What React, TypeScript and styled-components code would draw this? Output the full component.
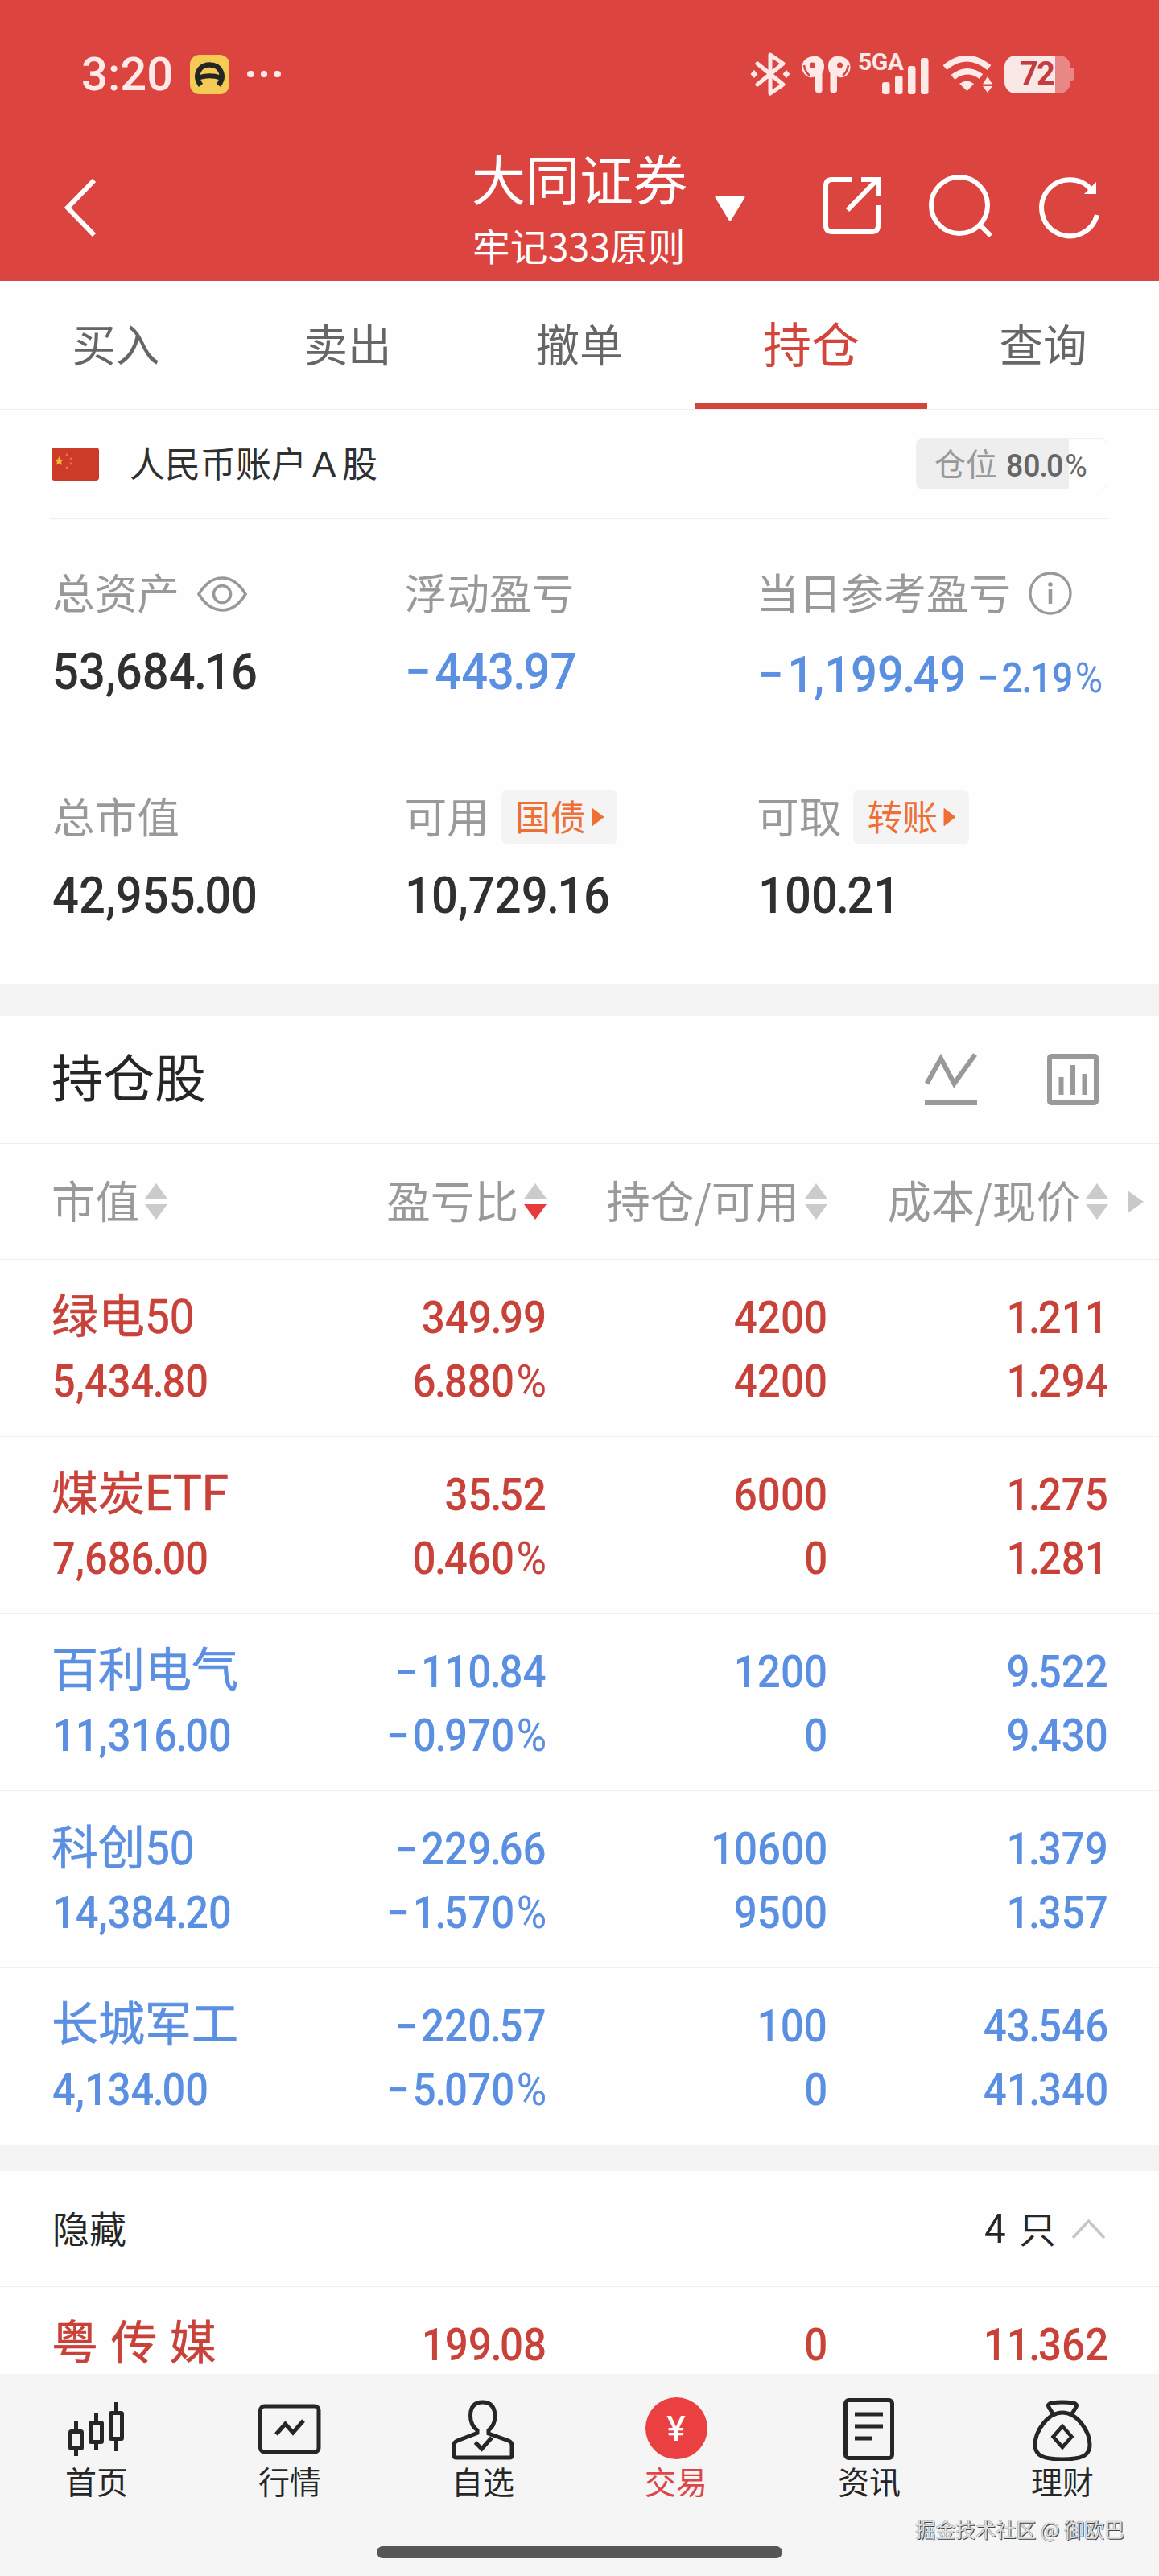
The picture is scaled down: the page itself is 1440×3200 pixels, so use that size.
import React from "react";
import styled, { createGlobalStyle, css } from "styled-components";

const CJK = `"Noto Sans CJK SC", sans-serif`;
const NUM = `Roboto, "Noto Sans CJK SC", sans-serif`;

const color = {
  brand: "#dc4440",
  active: "#d3453a",
  up: "#c8423a",
  down: "#5b8fe2",
  ink: "#262626",
  value: "#303030",
  label: "#999999",
  line: "#eeeeee",
  band: "#f4f4f4",
  orange: "#ee7034",
  status: "#fde9e8",
};

const GlobalStyle = createGlobalStyle`
  * { box-sizing: border-box; }
  body { margin: 0; background: #fefefe; }
`;

const Screen = styled.main`
  position: relative;
  display: flex;
  flex-direction: column;
  width: 1440px;
  height: 3200px;
  overflow: hidden;
  background: #fefefe;
  color: ${color.ink};
  font-family: ${CJK};
  white-space: nowrap;

  svg { display: block; flex: none; }
`;

/* Header */

const Header = styled.header`
  display: flex;
  flex-direction: column;
  flex: none;
  height: 349px;
  background: ${color.brand};
  color: #fff;
`;

const StatusBar = styled.div`
  display: flex;
  justify-content: space-between;
  align-items: center;
  height: 184px;
  padding: 0 105px 0 101px;
  color: ${color.status};
`;

const StatusGroup = styled.div`
  display: flex;
  align-items: center;
`;

const Clock = styled.span`
  width: 135px;
  font: 500 58px/60px ${NUM};
`;

const Dots = styled.div`
  display: flex;
  gap: 8px;
  margin-left: 22px;

  i { width: 8.5px; height: 8.5px; border-radius: 50%; background: ${color.status}; }
`;

const Battery = styled.div`
  display: flex;
  align-items: center;
  width: 87px;
  height: 47px;
  margin-left: 15px;
`;

const BatteryBody = styled.div`
  width: 82px;
  height: 47px;
  border-radius: 14px;
  padding-left: 19px;
  background: linear-gradient(90deg, #fae8e7 63px, #e98786 63px);
  color: #c23c40;
  font: 700 40px/46px ${NUM};
  letter-spacing: -2px;
`;

const BatteryNub = styled.div`
  width: 5px;
  height: 16px;
  border-radius: 0 4px 4px 0;
  background: #e98786;
`;

const NavBar = styled.div`
  display: grid;
  grid-template-columns: 508px 352px 1fr;
  height: 165px;
  padding-left: 80px;
`;

const BackButton = styled.div`
  padding-top: 38px;
`;

const TitleBlock = styled.div`
  display: flex;
  gap: 33px;
  margin-left: -2px;
`;

const Title = styled.div`
  font-size: 67px;
  line-height: 72px;
`;

const Subtitle = styled.div`
  margin-top: 22px;
  padding-left: 1px;
  font-size: 46.7px;
  line-height: 52px;
`;

const Caret = styled.div`
  padding-top: 59px;
`;

const Actions = styled.div`
  display: flex;
  gap: 58px;
  padding: 33px 0 0 82px;
`;

/* Tabs */

const Tabs = styled.nav`
  display: grid;
  grid-template-columns: repeat(5, 288px);
  flex: none;
  height: 160px;
  border-bottom: 1.5px solid ${color.line};
`;

const Tab = styled.div<{ $active?: boolean }>`
  height: 159px;
  text-align: center;
  color: #666;
  font-size: 54.5px;
  line-height: 153px;
  ${(p) =>
    p.$active &&
    css`
      color: ${color.active};
      font-size: 60px;
      line-height: 152px;
      border-bottom: 7px solid ${color.active};
    `}
`;

/* Account summary */

const Account = styled.section`
  display: flex;
  align-items: center;
  flex: none;
  height: 136px;
  margin: 0 62px;
  padding: 0 2px 1px 2px;
  border-bottom: 1.5px solid ${color.line};
`;

const AccountName = styled.div`
  flex: 1;
  margin: -5px 0 0 38px;
  color: #303030;
  font-size: 44px;
  line-height: 60px;
`;

const Position = styled.div`
  display: flex;
  align-items: center;
  gap: 11px;
  width: 238px;
  height: 64px;
  padding-left: 22px;
  border: 1px solid #f1f1f1;
  border-radius: 8px;
  background: linear-gradient(90deg, #eeeeee 189px, #fefefe 189px);
  color: ${color.label};
  font-size: 39px;
  line-height: 56px;

  > span { margin-top: -4px; }
`;

const PositionValue = styled.div`
  margin-top: 2px;
  color: #666;
`;

const NumText = styled.span<{ $size: number; $squeeze?: number; $right?: boolean; $weight?: number }>`
  display: inline-block;
  font-family: ${NUM};
  font-size: ${(p) => p.$size}px;
  font-weight: ${(p) => p.$weight ?? 500};
  transform: scaleX(${(p) => p.$squeeze ?? 0.92});
  transform-origin: ${(p) => (p.$right ? "right" : "left")} center;
`;

const Glyph = styled.span<{ $before?: number; $after?: number; $light?: boolean }>`
  margin-left: ${(p) => p.$before ?? 0}em;
  margin-right: ${(p) => p.$after ?? 0}em;
  font-weight: ${(p) => (p.$light ? 400 : "inherit")};
`;

/* Tightens the decimal point and opens up the minus and percent signs. */
const Num = ({ children, ...rest }: { children: string } & React.ComponentProps<typeof NumText>) => (
  <NumText {...rest}>
    {children.split(/([−.%])/).map((part, i) => {
      if (part === ".") return <Glyph key={i} $before={-0.03} $after={-0.05}>.</Glyph>;
      if (part === "−") return <Glyph key={i} $after={0.08}>−</Glyph>;
      if (part === "%") return <Glyph key={i} $before={0.05} $light>%</Glyph>;
      return part;
    })}
  </NumText>
);

const Summary = styled.section`
  display: grid;
  grid-template-columns: 437.5px 437.5px 1fr;
  grid-template-rows: 278px 1fr;
  flex: none;
  height: 577px;
  padding: 52px 0 0 65px;
`;

const Label = styled.div`
  display: flex;
  align-items: center;
  height: 80px;
  color: ${color.label};
  font-size: 52.7px;
  line-height: 80px;

  > span { margin-top: -7px; }
`;

const LabelIcon = styled.div<{ $lift?: number }>`
  margin: ${(p) => p.$lift ?? 0}px 0 0 22px;
`;

const Amount = styled.div<{ $loss?: boolean; $drop?: number }>`
  display: flex;
  align-items: baseline;
  margin-top: ${(p) => 18 + (p.$drop ?? 0)}px;
  line-height: 80px;
  color: ${(p) => (p.$loss ? color.down : color.value)};
`;

const DayProfit = styled.div`
  margin: 0 -9px 0 1px;
`;

const Withdrawable = styled(Amount)`
  padding-left: 2px;
`;

const Chip = styled.div`
  display: flex;
  align-items: center;
  height: 68px;
  margin-left: 15px;
  padding: 0 16px 0 17px;
  border-radius: 8px;
  background: ${color.band};
  color: ${color.orange};
  font-size: 44px;
  line-height: 60px;

  > span { margin: -5px 7px 0 0; }
`;

const Band = styled.div<{ $height: number }>`
  flex: none;
  height: ${(p) => p.$height}px;
  background: ${color.band};
`;

/* Holdings */

const SectionHead = styled.div`
  display: flex;
  align-items: center;
  flex: none;
  height: 159px;
  padding: 0 75px 0 64px;
  border-bottom: 1.5px solid ${color.line};
`;

const SectionTitle = styled.h2`
  flex: 1;
  margin: -13px 0 0;
  font-weight: 400;
  font-size: 64px;
  line-height: 90px;
`;

const SectionTools = styled.div`
  display: flex;
  gap: 86px;
`;

const columns = css`
  display: grid;
  grid-template-columns: 314px 300px 349px 349px 1fr;
  padding-left: 65px;
`;

const HeadRow = styled.div`
  ${columns}
  flex: none;
  align-items: center;
  height: 144px;
  border-bottom: 1.5px solid ${color.line};
`;

const HeadCell = styled.div<{ $first?: boolean }>`
  display: flex;
  align-items: center;
  justify-content: ${(p) => (p.$first ? "flex-start" : "flex-end")};
  gap: 7px;
  color: ${color.label};
  font-size: 54.6px;
  line-height: 80px;

  > span { margin: -6px 0 0 -1px; }
`;

const MoreArrow = styled.div`
  margin-left: 24px;
`;

const HoldingRow = styled.div<{ $up: boolean }>`
  ${columns}
  flex: none;
  height: 220px;
  padding-top: 33px;
  border-bottom: 1.5px solid #f1f1f1;
  color: ${(p) => (p.$up ? color.up : color.down)};
`;

const Cell = styled.div<{ $first?: boolean }>`
  display: flex;
  flex-direction: column;
  align-items: ${(p) => (p.$first ? "flex-start" : "flex-end")};
  line-height: 79px;
`;

const StockName = styled.div`
  height: 79px;
  margin-left: -1px;
  font-family: ${NUM};
  font-size: 58px;
  line-height: 75px;
  word-spacing: 1px;
  -webkit-text-stroke: 0.6px currentColor;
`;

const HiddenRow = styled.div`
  display: flex;
  align-items: center;
  justify-content: space-between;
  flex: none;
  height: 144px;
  padding: 0 66px 0 65px;
  border-bottom: 1.5px solid ${color.line};
  font-size: 46px;
  line-height: 60px;
`;

const HiddenCount = styled.div`
  display: flex;
  align-items: center;
  gap: 19px;
`;

const CountText = styled.div`
  display: flex;
  align-items: center;
  gap: 15px;

  > span:last-child { margin-top: -5px; }
`;

const HiddenTitle = styled.div`
  margin-top: -6px;
`;

const Clipped = styled.div`
  flex: none;
  height: 108px;
  overflow: hidden;
`;

/* Bottom bar */

const BottomBar = styled.footer`
  display: flex;
  flex-direction: column;
  align-items: center;
  flex: none;
  height: 252px;
  background: #f5f5f5;
`;

const BottomTabs = styled.div`
  display: grid;
  grid-template-columns: repeat(6, 240px);
  height: 214px;
  padding-top: 28px;
`;

const BottomTab = styled.div<{ $active?: boolean }>`
  display: flex;
  flex-direction: column;
  align-items: center;
  color: ${(p) => (p.$active ? "#dd4648" : "#262626")};
  font-size: 39px;
  line-height: 50px;

  > span { margin-top: -1px; }
`;

const Coin = styled.div`
  width: 77px;
  height: 77px;
  margin: 1px 0 2px;
  border-radius: 50%;
  background: #ea4041;
  color: #fff;
  text-align: center;
  font: 500 43px/77px Inter, sans-serif;
`;

const HomeIndicator = styled.div`
  width: 504px;
  height: 15px;
  border-radius: 8px;
  background: #565656;
`;

const Watermark = styled.div`
  position: absolute;
  right: 43px;
  bottom: 41px;
  color: #dedede;
  font-size: 25px;
  line-height: 36px;
  text-shadow: 1px 1px 0 #444, 0 0 1px #555;
`;

/* Icons */

const AppBadge = () => (
  <svg width="49" height="49" viewBox="0 0 49 49">
    <rect width="49" height="49" rx="12" fill="#f5cb56" />
    <path d="M13.500 38C4.500 26 11 12.500 24.500 12.500S44.500 26 35.500 38" fill="none" stroke="#222723" strokeWidth="6.500" />
    <path d="M11 28.500Q24.500 24 38 28.500" fill="none" stroke="#222723" strokeWidth="6" />
  </svg>
);

const Bluetooth = () => (
  <svg width="50" height="54" viewBox="0 0 50 54">
    <path d="M9 14L41 40L25 51V3L41 14L9 40" fill="none" stroke={color.status} strokeWidth="5" strokeLinejoin="round" strokeLinecap="round" />
    <path d="M5 22l4.500 5L5 32L.5 27zM45 22l4.500 5L45 32L40.500 27z" fill={color.status} />
  </svg>
);

const Earbuds = () => (
  <svg width="63" height="47" viewBox="0 0 63 47">
    <g fill={color.status}>
      <path d="M15 1C23 0 29 5 29 13Q29 19 26.500 22V43Q26.500 46 24 46H21Q18 46 18 43V26Q9 30 3 21C-1 12 3 2 15 1z" />
      <path d="M48 1C40 0 34 5 34 13Q34 19 36.500 22V43Q36.500 46 39 46H42Q45 46 45 43V26Q54 30 60 21C64 12 60 2 48 1z" />
    </g>
    <g fill="none" stroke={color.brand} strokeWidth="2.500">
      <path d="M4 12Q5 20 11 25M59 12Q58 20 52 25" />
    </g>
    <circle cx="14.500" cy="12" r="3.500" fill={color.brand} />
    <circle cx="48.500" cy="12" r="3.500" fill={color.brand} />
  </svg>
);

const Network = styled.div`
  display: flex;
  align-items: flex-start;
  width: 89px;
  height: 54px;
  margin: -5px 0 0 8px;
`;

const NetworkType = styled.span`
  width: 30px;
  font: 700 30px/27px ${NUM};
  letter-spacing: -0.5px;
`;

const Signal = () => (
  <svg width="58" height="56" viewBox="0 -1 58 56" fill={color.status}>
    <rect x="0" y="38" width="9.500" height="15" rx="3" />
    <rect x="16" y="30" width="9.500" height="23" rx="3" />
    <rect x="32" y="18" width="9.500" height="35" rx="3" />
    <rect x="48" y="8" width="9.500" height="45" rx="3" />
  </svg>
);

const Wifi = () => (
  <svg width="62" height="46" viewBox="0 0 62 46">
    <g fill="none" stroke={color.status} strokeWidth="7.500">
      <path d="M3 15Q30 -8 58 15" />
      <path d="M13 27Q30 13 48 26" />
    </g>
    <path d="M21 35Q30 28 39 35L30.500 44z" fill={color.status} />
    <path d="M56 26l6 9.500H50zM56 46l6-8H50z" fill={color.status} />
  </svg>
);

const Back = () => (
  <svg width="42" height="72" viewBox="0 0 42 72">
    <path d="M37 2L4 36L37 70" fill="none" stroke="#fff" strokeWidth="6" />
  </svg>
);

const CaretDown = () => (
  <svg width="40" height="33" viewBox="0 0 40 33">
    <path d="M3 2H37L20 30z" fill="#fff" stroke="#fff" strokeWidth="3" strokeLinejoin="round" />
  </svg>
);

const Share = () => (
  <svg width="73" height="78" viewBox="0 0 73 78" fill="none" stroke="#fff" strokeWidth="6">
    <path d="M36 4H12Q4 4 4 12V61Q4 69 12 69H61Q69 69 69 61V36" transform="translate(0 0)" />
    <path d="M48 4H69V25M67 5L31 42" />
  </svg>
);

const ShareSlot = styled.div`
  padding-top: 2px;
`;

const Search = () => (
  <svg width="80" height="80" viewBox="0 0 80 80" fill="none" stroke="#fff" strokeWidth="6">
    <circle cx="39" cy="38" r="35" />
    <path d="M64 62L78 76" />
  </svg>
);

const Refresh = () => (
  <svg width="76" height="82" viewBox="0 -2 76 82">
    <path d="M66 18A35 35 0 1 0 72 48" fill="none" stroke="#fff" strokeWidth="6" />
    <path d="M71 7V22H56z" fill="#fff" />
  </svg>
);

const Flag = () => (
  <svg width="59" height="41" viewBox="0 0 59 41">
    <rect width="59" height="41" rx="4" fill="#cb3b27" />
    <path d="M9.500 11l1.600 3.800 4 .3-3.100 2.600 1 4-3.500-2.200L6 21.700l1-4-3.100-2.600 4-.3z" fill="#f5b53c" />
    <g fill="#e07a35">
      <circle cx="19" cy="9" r="1.400" />
      <circle cx="24" cy="14" r="1.400" />
      <circle cx="24" cy="20" r="1.400" />
      <circle cx="19" cy="25" r="1.400" />
    </g>
  </svg>
);

const Eye = () => (
  <svg width="62" height="44" viewBox="0 0 62 44" fill="none" stroke="#999" strokeWidth="3.600">
    <path d="M2 22Q14 2 31 2T60 22Q48 42 31 42T2 22z" />
    <circle cx="31" cy="22" r="10.500" />
  </svg>
);

const Info = () => (
  <svg width="54" height="54" viewBox="0 0 54 54">
    <circle cx="27" cy="27" r="25" fill="none" stroke="#999" strokeWidth="3.300" />
    <circle cx="27" cy="16" r="2.800" fill="#999" />
    <path d="M27 22V40" stroke="#999" strokeWidth="4.500" />
  </svg>
);

const ChipArrow = () => (
  <svg width="16" height="24" viewBox="0 0 16 24">
    <path d="M1 1.500L15 12L1 22.500z" fill={color.orange} stroke={color.orange} strokeLinejoin="round" />
  </svg>
);

const TrendIcon = () => (
  <svg width="66" height="66" viewBox="0 0 66 66" fill="none" stroke="#999" strokeWidth="6">
    <path d="M2.500 38L20 7L36.500 38L62.500 2M0 62H65" />
  </svg>
);

const BarsIcon = () => (
  <svg width="64" height="66" viewBox="0 0 64 66" fill="none" stroke="#999" strokeWidth="6">
    <rect x="3" y="4" width="58" height="58" rx="2" />
    <path d="M17.500 30V52M32 15V52M46.500 26V52" />
  </svg>
);

const Sort = ({ down }: { down?: boolean }) => (
  <svg width="28" height="46" viewBox="0 0 28 46">
    <path d="M14 0L28 19H0z" fill="#cbcbcb" />
    <path d="M14 45L0 26H28z" fill={down ? "#e8393c" : "#cbcbcb"} />
  </svg>
);

const MoreIcon = () => (
  <svg width="20" height="28" viewBox="0 0 20 28">
    <path d="M0 0L20 14L0 28z" fill="#c9c9c9" />
  </svg>
);

const ChevronUp = () => (
  <svg width="43" height="26" viewBox="0 0 43 26">
    <path d="M2 24L21.500 3L41 24" fill="none" stroke="#c6c6c6" strokeWidth="3.500" />
  </svg>
);

const NavIcon = ({ children }: { children: React.ReactNode }) => (
  <svg width="80" height="80" viewBox="0 0 80 80" fill="none" stroke="#262626" strokeWidth="5">
    {children}
  </svg>
);

const Candles = () => (
  <NavIcon>
    <rect x="7.500" y="43.500" width="14" height="21" rx="1" />
    <rect x="32.500" y="32.500" width="14" height="24" rx="1" />
    <rect x="57.500" y="20.500" width="14" height="32" rx="1" />
    <path d="M14.500 31V43M14.500 65V74M39.500 20V32M39.500 57V67M64.500 7V20M64.500 53V68" />
  </NavIcon>
);

const Market = () => (
  <NavIcon>
    <rect x="3.500" y="12" width="72.500" height="57" rx="5" />
    <path d="M23 47L34.500 34L44 45L57 30" />
  </NavIcon>
);

const Person = () => (
  <NavIcon>
    <path d="M33 46V42Q24.500 36 24.500 24Q24.500 7 39.500 7T55 24Q55 36 47 42V46L72 55Q76 57 76 60V73Q76 76 73 76H7Q4 76 4 73V60Q4 57 8 55L34 45" />
    <path d="M30.500 57L38.500 65L51 51" />
  </NavIcon>
);

const Doc = () => (
  <NavIcon>
    <rect x="10.500" y="4.500" width="58" height="72" rx="4" />
    <path d="M22 22H57M22 37H57M22 52H43" />
  </NavIcon>
);

const Bag = () => (
  <NavIcon>
    <path d="M29 23L23 13Q21 9 27 8Q40 6 53 8Q59 9 57 13L51 23" />
    <path d="M40 20C22 20 6 43 6 60C6 73 15 78 40 78S74 73 74 60C74 43 58 20 40 20z" />
    <path d="M40 37L51.500 50L40 63L28.500 50z" strokeWidth="4.500" />
  </NavIcon>
);

/* Data */

type Holding = {
  name: string;
  code?: string;
  codeSize?: number;
  market: string;
  profit: string;
  ratio: string;
  held: string;
  available: string;
  cost: string;
  price: string;
  up: boolean;
};

const holdings: Holding[] = [
  { name: "绿电", code: "50", market: "5,434.80", profit: "349.99", ratio: "6.880%", held: "4200", available: "4200", cost: "1.211", price: "1.294", up: true },
  { name: "煤炭", code: "ETF", codeSize: 61.5, market: "7,686.00", profit: "35.52", ratio: "0.460%", held: "6000", available: "0", cost: "1.275", price: "1.281", up: true },
  { name: "百利电气", market: "11,316.00", profit: "−110.84", ratio: "−0.970%", held: "1200", available: "0", cost: "9.522", price: "9.430", up: false },
  { name: "科创", code: "50", market: "14,384.20", profit: "−229.66", ratio: "−1.570%", held: "10600", available: "9500", cost: "1.379", price: "1.357", up: false },
  { name: "长城军工", market: "4,134.00", profit: "−220.57", ratio: "−5.070%", held: "100", available: "0", cost: "43.546", price: "41.340", up: false },
];

const hidden: Holding = { name: "粤 传 媒", market: "", profit: "199.08", ratio: "", held: "0", available: "", cost: "11.362", price: "", up: true };

const tabs = ["买入", "卖出", "撤单", "持仓", "查询"];
const headers = ["市值", "盈亏比", "持仓/可用", "成本/现价"];

const Pair = ({ top, bottom }: { top: string; bottom: string }) => (
  <Cell>
    <Num $size={55} $squeeze={0.93} $right>{top}</Num>
    <Num $size={55} $squeeze={0.93} $right>{bottom}</Num>
  </Cell>
);

const HoldingLine = ({ item }: { item: Holding }) => (
  <HoldingRow $up={item.up}>
    <Cell $first>
      <StockName>
        {item.name}
        {item.code && (
          <Num $size={item.codeSize ?? 59} $squeeze={item.codeSize ? 0.98 : 0.93} $weight={400}>{item.code}</Num>
        )}
      </StockName>
      <Num $size={55} $squeeze={0.92}>{item.market}</Num>
    </Cell>
    <Pair top={item.profit} bottom={item.ratio} />
    <Pair top={item.held} bottom={item.available} />
    <Pair top={item.cost} bottom={item.price} />
  </HoldingRow>
);

const BluetoothSlot = styled.div`
  margin-right: 13px;
`;

const WifiSlot = styled.div`
  margin-left: 16px;
`;

export default function App() {
  return (
    <Screen>
      <GlobalStyle />
      <Header>
        <StatusBar>
          <StatusGroup>
            <Clock>3:20</Clock>
            <AppBadge />
            <Dots><i /><i /><i /></Dots>
          </StatusGroup>
          <StatusGroup>
            <BluetoothSlot><Bluetooth /></BluetoothSlot>
            <Earbuds />
            <Network>
              <NetworkType>5GA</NetworkType>
              <Signal />
            </Network>
            <WifiSlot><Wifi /></WifiSlot>
            <Battery>
              <BatteryBody>72</BatteryBody>
              <BatteryNub />
            </Battery>
          </StatusGroup>
        </StatusBar>
        <NavBar>
          <BackButton><Back /></BackButton>
          <TitleBlock>
            <div>
              <Title>大同证券</Title>
              <Subtitle>牢记333原则</Subtitle>
            </div>
            <Caret><CaretDown /></Caret>
          </TitleBlock>
          <Actions>
            <ShareSlot><Share /></ShareSlot>
            <Search />
            <Refresh />
          </Actions>
        </NavBar>
      </Header>

      <Tabs>
        {tabs.map((t) => (
          <Tab key={t} $active={t === "持仓"}>{t}</Tab>
        ))}
      </Tabs>

      <Account>
        <Flag />
        <AccountName>人民币账户Ａ股</AccountName>
        <Position>
          <span>仓位</span>
          <PositionValue><Num $size={39} $squeeze={0.96}>80.0%</Num></PositionValue>
        </Position>
      </Account>

      <Summary>
        <div>
          <Label><span>总资产</span><LabelIcon $lift={2}><Eye /></LabelIcon></Label>
          <Amount><Num $size={63}>53,684.16</Num></Amount>
        </div>
        <div>
          <Label><span>浮动盈亏</span></Label>
          <Amount $loss><Num $size={63}>−443.97</Num></Amount>
        </div>
        <div>
          <Label><span>当日参考盈亏</span><LabelIcon $lift={-1}><Info /></LabelIcon></Label>
          <Amount $loss $drop={4}>
            <DayProfit><Num $size={63}>−1,199.49</Num></DayProfit>
            <Num $size={51}>−2.19%</Num>
          </Amount>
        </div>
        <div>
          <Label><span>总市值</span></Label>
          <Amount><Num $size={63}>42,955.00</Num></Amount>
        </div>
        <div>
          <Label><span>可用</span><Chip><span>国债</span><ChipArrow /></Chip></Label>
          <Amount><Num $size={63}>10,729.16</Num></Amount>
        </div>
        <div>
          <Label><span>可取</span><Chip><span>转账</span><ChipArrow /></Chip></Label>
          <Withdrawable><Num $size={63}>100.21</Num></Withdrawable>
        </div>
      </Summary>

      <Band $height={40} />

      <SectionHead>
        <SectionTitle>持仓股</SectionTitle>
        <SectionTools>
          <TrendIcon />
          <BarsIcon />
        </SectionTools>
      </SectionHead>
      <HeadRow>
        {headers.map((h, i) => (
          <HeadCell key={h} $first={i === 0}>
            <span>{h}</span>
            <Sort down={i === 1} />
          </HeadCell>
        ))}
        <MoreArrow><MoreIcon /></MoreArrow>
      </HeadRow>
      {holdings.map((item) => (
        <HoldingLine key={item.name} item={item} />
      ))}

      <Band $height={32} />

      <HiddenRow>
        <HiddenTitle>隐藏</HiddenTitle>
        <HiddenCount>
          <CountText>
            <Num $size={50} $squeeze={0.95} $weight={400}>4</Num>
            <span>只</span>
          </CountText>
          <ChevronUp />
        </HiddenCount>
      </HiddenRow>
      <Clipped>
        <HoldingLine item={hidden} />
      </Clipped>

      <BottomBar>
        <BottomTabs>
          <BottomTab><Candles /><span>首页</span></BottomTab>
          <BottomTab><Market /><span>行情</span></BottomTab>
          <BottomTab><Person /><span>自选</span></BottomTab>
          <BottomTab $active><Coin>¥</Coin><span>交易</span></BottomTab>
          <BottomTab><Doc /><span>资讯</span></BottomTab>
          <BottomTab><Bag /><span>理财</span></BottomTab>
        </BottomTabs>
        <HomeIndicator />
      </BottomBar>

      <Watermark>掘金技术社区 @ 御欧巴</Watermark>
    </Screen>
  );
}
